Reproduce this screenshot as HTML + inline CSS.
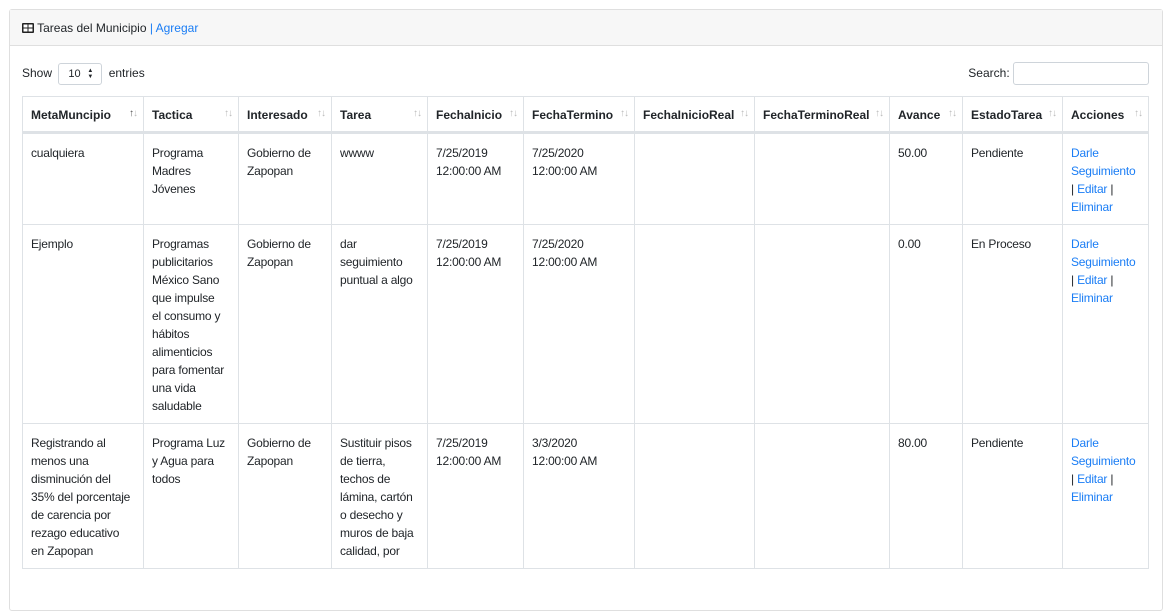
<!DOCTYPE html>
<html><head><meta charset="utf-8"><style>
html,body{margin:0;background:#fff;font-family:"Liberation Sans",sans-serif;font-size:12px;color:#212529;overflow:hidden;width:1172px;height:560px}
.card{position:absolute;left:9px;top:9px;width:1152px;height:600px;border:1px solid #dfdfdf;border-radius:3px}
.hd{height:35px;background:#f7f7f7;border-bottom:1px solid #dfdfdf;padding-left:12px;line-height:37px}
a{color:#1a7df5;text-decoration:none}
.show{position:absolute;left:12px;top:52px;line-height:22px}
.sel{display:inline-block;width:44px;height:22px;border:1px solid #ced4da;border-radius:3px;vertical-align:middle;margin:0 3px;box-sizing:border-box;position:relative}
.sel span{position:absolute;left:9px;top:0;font-size:11px;line-height:20px}
.sel i{position:absolute;right:8px;font-style:normal;font-size:6px;top:4px;line-height:6px}
.srch{position:absolute;right:13px;top:51px;line-height:24px}
.srch div{display:inline-block;width:134px;height:21px;border:1px solid #ced4da;border-radius:3px;vertical-align:middle}
table{position:absolute;left:12px;top:86px;border-collapse:collapse;table-layout:fixed;width:1126px}
th,td{border:1px solid #dee2e6;padding:10px 8px 8px;vertical-align:top;text-align:left;line-height:18px}
td{letter-spacing:-0.2px}
th{font-weight:bold;height:17px;padding:9px 8px 7px;border-bottom:3px solid #dee2e6;position:relative;white-space:nowrap;font-size:12px}
th i{position:absolute;right:6px;top:8px;color:#bbb;font-style:normal;font-size:10px;letter-spacing:-1px}
th i b{color:#555;font-weight:normal}
</style></head><body>
<div class="card">
<div class="hd"><svg width="12" height="10" viewBox="0 0 12 10" style="vertical-align:-1px"><rect x="0" y="0" width="12" height="10" rx="1" fill="#222"/><rect x="1.5" y="1.5" width="4" height="3" fill="#fff"/><rect x="6.5" y="1.5" width="4" height="3" fill="#fff"/><rect x="1.5" y="5.5" width="4" height="3" fill="#fff"/><rect x="6.5" y="5.5" width="4" height="3" fill="#fff"/></svg> Tareas del Municipio <a>| Agregar</a></div>
<div class="show">Show <span class="sel"><span>10</span><i>▲<br>▼</i></span> entries</div>
<div class="srch">Search: <div></div></div>
<table>
<colgroup><col style="width:121px"><col style="width:95px"><col style="width:93px"><col style="width:96px"><col style="width:96px"><col style="width:111px"><col style="width:120px"><col style="width:135px"><col style="width:73px"><col style="width:100px"><col style="width:86px"></colgroup>
<tr><th>MetaMuncipio<i><b>↑</b>↓</i></th><th>Tactica<i>↑↓</i></th><th>Interesado<i>↑↓</i></th><th>Tarea<i>↑↓</i></th><th>FechaInicio<i>↑↓</i></th><th>FechaTermino<i>↑↓</i></th><th>FechaInicioReal<i>↑↓</i></th><th>FechaTerminoReal<i>↑↓</i></th><th>Avance<i>↑↓</i></th><th>EstadoTarea<i>↑↓</i></th><th>Acciones<i>↑↓</i></th></tr>
<tr style="height:90px"><td>cualquiera</td><td>Programa Madres Jóvenes</td><td>Gobierno de Zapopan</td><td>wwww</td><td>7/25/2019 12:00:00 AM</td><td>7/25/2020 12:00:00 AM</td><td></td><td></td><td>50.00</td><td>Pendiente</td><td><a>Darle Seguimiento</a> | <a>Editar</a> | <a>Eliminar</a></td></tr>
<tr style="height:199px"><td>Ejemplo</td><td>Programas publicitarios México Sano que impulse<br>el consumo y hábitos alimenticios para fomentar una vida saludable</td><td>Gobierno de Zapopan</td><td>dar seguimiento puntual a algo</td><td>7/25/2019 12:00:00 AM</td><td>7/25/2020 12:00:00 AM</td><td></td><td></td><td>0.00</td><td>En Proceso</td><td><a>Darle Seguimiento</a> | <a>Editar</a> | <a>Eliminar</a></td></tr>
<tr><td>Registrando al menos una disminución del 35% del porcentaje de carencia por rezago educativo en Zapopan</td><td>Programa Luz y Agua para todos</td><td>Gobierno de Zapopan</td><td>Sustituir pisos de tierra, techos de lámina, cartón o desecho y muros de baja calidad, por</td><td>7/25/2019 12:00:00 AM</td><td>3/3/2020<br>12:00:00 AM</td><td></td><td></td><td>80.00</td><td>Pendiente</td><td><a>Darle Seguimiento</a> | <a>Editar</a> | <a>Eliminar</a></td></tr>
</table>
</div>
</body></html>
